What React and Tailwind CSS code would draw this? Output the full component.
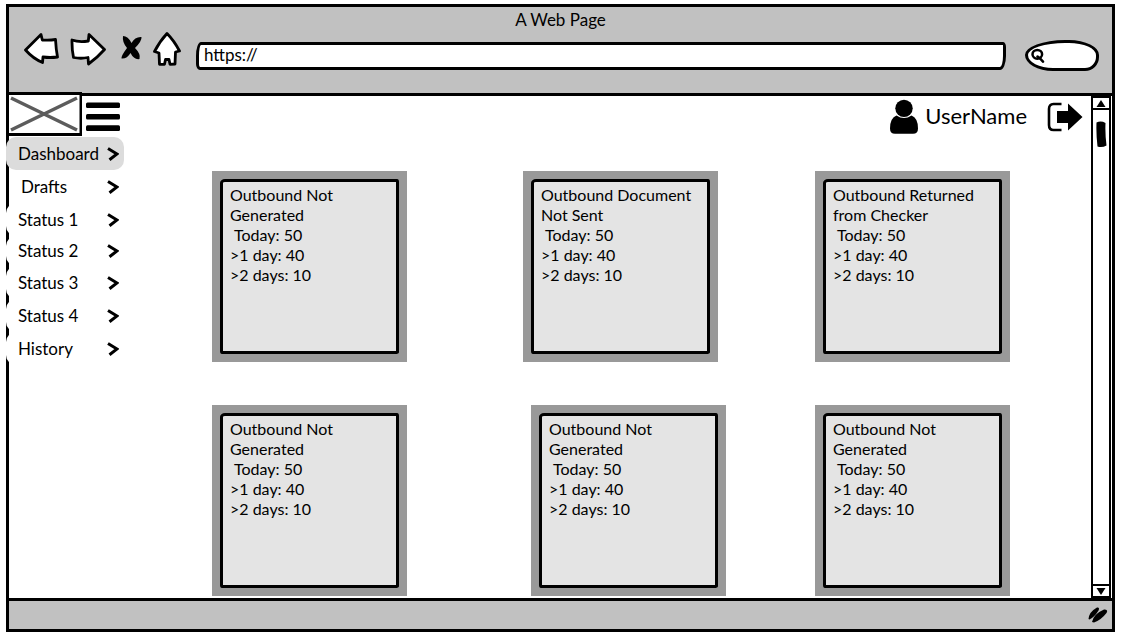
import React from "react";

const navItems = [
  { label: "Dashboard", row: "-ml-[3px] h-[33px] bg-[#dcdcdc]" },
  { label: "Drafts", row: "h-[33px]" },
  { label: "Status 1", row: "-ml-[3px] h-[33px] bg-white" },
  { label: "Status 2", row: "-ml-[3px] h-[30px] bg-white" },
  { label: "Status 3", row: "-ml-[3px] h-[33px] bg-white" },
  { label: "Status 4", row: "-ml-[3px] h-[33px] bg-white" },
  { label: "History", row: "-ml-[3px] h-[33px] bg-white" },
];

const cardRows = [
  {
    columns: "grid-cols-[311fr_292fr_195px]",
    titles: ["Outbound Not Generated", "Outbound Document Not Sent", "Outbound Returned from Checker"],
  },
  {
    columns: "grid-cols-[319fr_284fr_195px]",
    titles: ["Outbound Not Generated", "Outbound Not Generated", "Outbound Not Generated"],
  },
];

function Chevron() {
  return (
    <svg width="12" height="14" viewBox="0 0 12 14" fill="none" stroke="#000" strokeWidth="3" aria-hidden="true">
      <path d="M1 1.5 L10 7 L2.5 12.8" />
    </svg>
  );
}

function BrowserButtons() {
  const line = { fill: "#fff", stroke: "#000", strokeWidth: 2.8, strokeLinejoin: "round" };
  return (
    <div className="flex gap-[10px]">
      <button type="button" aria-label="Back">
        <svg width="36" height="34" viewBox="24 32 36 34">
          <path {...line} d="M25.5 50 L41 34.5 L42.3 40 Q50 40.5 55.5 39.5 Q56 49 57.5 57 Q50 58 43 57 L42.5 62.5 Q33 58.5 25.5 50Z" />
        </svg>
      </button>
      <button type="button" aria-label="Forward">
        <svg width="36" height="34" viewBox="70 32 36 34">
          <path {...line} d="M104.5 49.5 L89 34.5 L88.3 41 Q79 42.5 72 40 Q71.8 50 73.5 57.5 Q81 59 88 57.5 L88.5 64 Q97 58 104.5 49.5Z" />
        </svg>
      </button>
      <button type="button" aria-label="Stop">
        <svg width="26" height="34" viewBox="116 32 26 34">
          <path d="M123 36 Q128 36 131.5 43 Q135 36.5 141.5 37 Q142 41 135 48 Q141 54 139.5 59 Q134 60 130.5 53 Q127 59 121.5 58.5 Q121 56 127 48 Q122 42 123 36Z" />
        </svg>
      </button>
      <button type="button" aria-label="Home">
        <svg width="30" height="34" viewBox="152 32 30 34">
          <path {...line} d="M167 33.5 Q174 40.5 179.5 51 L175.5 52 L175 64 L170 64.3 L169 59.5 L165.5 59.5 L164.5 64.3 L159.5 64.3 L159 53 L154.5 51.5 Q160 41 167 33.5Z" />
        </svg>
      </button>
    </div>
  );
}

function BrowserHeader() {
  return (
    <header className="border-b-[3px] border-black bg-[#c1c1c1] pt-[3px] pb-[22px]">
      <h1 className="text-center text-[17px] leading-5">A Web Page</h1>
      <div className="flex items-start pt-[2px] pr-[13px] pl-[15px]">
        <BrowserButtons />
        <div className="flex flex-1 items-center gap-[19px] pt-2 pl-[14px]">
          <input
            type="text"
            aria-label="Address"
            defaultValue="https://"
            className="h-[28px] min-w-0 flex-1 rounded-[5px_3px_6px_4px/14px_5px_14px_6px] border-[3px] border-black bg-white px-[5px] pb-[2px] text-[17px] outline-none"
          />
          <label className="flex h-[31px] w-[74px] items-center rounded-[40px_30px_14px_28px/15px_15px_14px_16px] border-[3px] border-black bg-white pl-[3px]">
            <svg width="14" height="15" viewBox="0 0 14 15" fill="none" stroke="#000" strokeWidth="2.5" className="shrink-0" aria-hidden="true">
              <ellipse cx="6.3" cy="6.3" rx="4.8" ry="4.4" />
              <path d="M6.5 8.5 L9 10.5 L12 13.7" strokeLinecap="round" />
            </svg>
            <input type="search" aria-label="Search" className="w-0 min-w-0 flex-1 bg-transparent text-sm outline-none" />
          </label>
        </div>
      </div>
    </header>
  );
}

function Sidebar() {
  return (
    <aside className="w-[115px] shrink-0">
      <div className="relative -mt-1 -ml-[3px] flex items-start gap-1">
        <svg width="76" height="44" viewBox="0 0 76 44" className="shrink-0" role="img" aria-label="Logo">
          <rect x="1.5" y="1.5" width="73.5" height="41" fill="#fff" stroke="#000" strokeWidth="3" />
          <path d="M5 6 L71 38 M5 38 L71 6" stroke="#5c5c5c" strokeWidth="3.5" />
        </svg>
        <button type="button" aria-label="Toggle menu" className="shrink-0 pt-[10px]">
          <svg width="34" height="30" viewBox="0 0 34 30">
            <rect y="0.5" width="34" height="5.6" rx="1.5" />
            <rect y="12" width="34" height="5.6" rx="1.5" />
            <rect y="23.3" width="34" height="5.6" rx="1.5" />
          </svg>
        </button>
      </div>
      <nav className="pt-px">
        {navItems.map((item) => (
          <a
            key={item.label}
            href="#"
            className={"flex items-center justify-between rounded-[10px] pr-[5px] pl-3 text-[17px] leading-5 " + item.row}
          >
            {item.label}
            <Chevron />
          </a>
        ))}
      </nav>
    </aside>
  );
}

function UserBar() {
  return (
    <div className="flex h-[41px] items-center justify-end pr-2">
      <svg width="30" height="36" viewBox="0 0 30 36" aria-hidden="true">
        <ellipse cx="15" cy="9.3" rx="8.7" ry="8.6" />
        <path d="M7.5 16.5 Q15 21.5 22.5 16.5 Q29 19 29 29.5 Q29 34.8 24 34.8 H6 Q1 34.8 1 29.5 Q1 19 7.5 16.5Z" />
      </svg>
      <span className="ml-[6px] pb-[2px] text-[22px] leading-6">UserName</span>
      <button type="button" aria-label="Log out" className="ml-5">
        <svg width="36" height="30" viewBox="0 0 36 30">
          <path d="M14.5 2 H6.5 Q2 2 2 7 V23 Q2 28 6.5 28 H14.5" fill="none" stroke="#000" strokeWidth="2.6" />
          <path d="M10 9 H21 V1.5 L35.5 15 L21 28.5 V21 H10Z" />
        </svg>
      </button>
    </div>
  );
}

function Card({ title }) {
  return (
    <article className="h-[191px] w-[195px] bg-[#999999] p-2">
      <div className="h-full rounded-[5px_2px_4px_2px/4px_3px_2px_3px] border-[3px] border-black bg-[#e4e4e4] px-[7px] pt-[3px] text-base leading-5">
        <h2>{title}</h2>
        <p className="pl-1">Today: 50</p>
        <p>&gt;1 day: 40</p>
        <p>&gt;2 days: 10</p>
      </div>
    </article>
  );
}

function Scrollbar() {
  return (
    <div className="mr-px flex w-5 shrink-0 flex-col border-x-2 border-black bg-white">
      <button type="button" aria-label="Scroll up" className="flex h-[14px] items-center justify-center border-y-2 border-black">
        <svg width="10" height="7" viewBox="0 0 10 7"><path d="M5 0 L9.5 7 H0.5Z" /></svg>
      </button>
      <svg width="11" height="27" viewBox="0 0 11 27" className="mt-[11px] ml-[3px]" aria-hidden="true">
        <path d="M0.5 1.5 Q5 -0.5 9.5 2 Q9 13 10.5 24.5 Q6 27 1.5 25.5 Q0 13 0.5 1.5Z" />
      </svg>
      <div className="flex-1" />
      <button type="button" aria-label="Scroll down" className="flex h-[14px] items-center justify-center border-y-2 border-black">
        <svg width="10" height="7" viewBox="0 0 10 7"><path d="M5 7 L9.5 0 H0.5Z" /></svg>
      </button>
    </div>
  );
}

export default function App() {
  return (
    <div className="flex min-h-screen flex-col bg-white pt-1 pr-[7px] pb-px pl-[6px] font-['Lato','Liberation_Sans',sans-serif] text-black">
      <div className="flex flex-1 flex-col border-[3px] border-black">
        <BrowserHeader />
        <div className="flex flex-1">
          <Sidebar />
          <main className="min-w-0 flex-1">
            <UserBar />
            <div className="flex flex-col gap-[43px] pt-[34px] pr-[81px] pb-[2px] pl-[88px]">
              {cardRows.map((row) => (
                <div key={row.columns} className={"grid " + row.columns}>
                  {row.titles.map((title, i) => (
                    <Card key={i} title={title} />
                  ))}
                </div>
              ))}
            </div>
          </main>
          <Scrollbar />
        </div>
        <footer className="flex h-[31px] items-center justify-end border-t-[3px] border-black bg-[#c1c1c1] pr-1">
          <svg width="20" height="20" viewBox="0 0 20 20" aria-hidden="true">
            <path d="M0.5 14 Q1 7 9 2.5 Q12 2 10.5 5.5 Q6.5 12 1.5 14.5Z" />
            <path d="M4 17 Q5.5 9 16 4.5 Q20.5 4 18.5 8 Q13 15 6 17.5Z" />
          </svg>
        </footer>
      </div>
    </div>
  );
}
